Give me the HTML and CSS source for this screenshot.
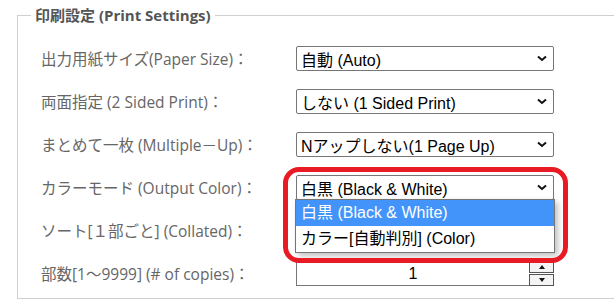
FILE: index.html
```html
<!DOCTYPE html>
<html lang="ja">
<head>
  <meta charset="UTF-8">
  <meta name="viewport" content="width=device-width, initial-scale=1.0">
  <title>印刷設定</title>
  <link rel="stylesheet" href="styles.css">
</head>
<body>

<fieldset class="settings">
  <legend>印刷設定 (Print Settings)</legend>

  <div class="row">
    <label>出力用紙サイズ(Paper Size)：</label>
    <div class="select"><span>自動 (Auto)</span><svg class="chev" width="10" height="7" viewBox="0 0 10 7"><polyline points="1,1.5 5,5 9,1.5" /></svg></div>
  </div>

  <div class="row">
    <label>両面指定 (2 Sided Print)：</label>
    <div class="select"><span>しない (1 Sided Print)</span><svg class="chev" width="10" height="7" viewBox="0 0 10 7"><polyline points="1,1.5 5,5 9,1.5" /></svg></div>
  </div>

  <div class="row">
    <label>まとめて一枚 (Multiple－Up)：</label>
    <div class="select"><span>Nアップしない(1 Page Up)</span><svg class="chev" width="10" height="7" viewBox="0 0 10 7"><polyline points="1,1.5 5,5 9,1.5" /></svg></div>
  </div>

  <div class="row">
    <label>カラーモード (Output Color)：</label>
    <div class="select open">
      <span>白黒 (Black &amp; White)</span><svg class="chev" width="10" height="7" viewBox="0 0 10 7"><polyline points="1,1.5 5,5 9,1.5" /></svg>
      <ul class="dropdown">
        <li class="active">白黒 (Black &amp; White)</li>
        <li>カラー[自動判別] (Color)</li>
      </ul>
      <div class="mark"></div>
    </div>
  </div>

  <div class="row">
    <label>ソート[１部ごと] (Collated)：</label>
    <div class="select"></div>
  </div>

  <div class="row">
    <label>部数[1～9999] (# of copies)：</label>
    <div class="number">
      <div class="value">1</div>
      <div class="spin">
        <div class="btn"><svg width="6" height="4" viewBox="0 0 6 4"><polygon points="3,0 6,4 0,4" /></svg></div>
        <div class="btn"><svg width="6" height="4" viewBox="0 0 6 4"><polygon points="0,0 6,0 3,4" /></svg></div>
      </div>
    </div>
  </div>
</fieldset>

</body>
</html>
```

FILE: styles.css
```css
body { margin: 0; overflow: hidden; background-color: #ffffff; font-family: "Open Sans", "Noto Sans CJK JP", sans-serif; }
.settings { margin: 5px 0 0 17px; width: 640px; border: 1px solid #cfcfcf; border-right: none; padding: 21px 0 12px 23px; display: flex; flex-direction: column; gap: 18px; }
legend { font-size: 15px; line-height: 20px; font-weight: bold; color: #555; padding: 0 4px; margin-left: -10px; }
.row { display: flex; align-items: center; height: 25px; }
label { width: 255px; font-size: 15.5px; color: #666; white-space: nowrap; }
.select { position: relative; box-sizing: border-box; width: 258px; height: 25px; border: 1px solid #767676; border-radius: 2px; display: flex; align-items: center; justify-content: space-between; padding: 0 6px 0 4px; font-family: "Liberation Sans", "Noto Sans CJK JP", sans-serif; font-size: 16px; color: #000; }
.chev { fill: none; stroke: #111; stroke-width: 2; }
.dropdown { position: absolute; top: 23px; left: -2px; width: 260px; margin: 0; padding: 0; list-style: none; box-sizing: border-box; border: 1px solid #767676; background-color: #fff; box-shadow: 3px 3px 6px rgba(0, 0, 0, 0.25); z-index: 2; }
.dropdown li { height: 26px; line-height: 26px; padding-left: 5px; }
.dropdown li.active { background-color: #4394fa; color: #fff; }
.mark { position: absolute; left: -14px; top: -9px; width: 285px; height: 96px; box-sizing: border-box; border: 5px solid #e81b24; border-radius: 16px; z-index: 3; }
.number { display: flex; width: 258px; height: 25px; font-family: "Liberation Sans", "Noto Sans CJK JP", sans-serif; font-size: 16px; }
.value { flex: 1; box-sizing: border-box; border: 1px solid #767676; border-right: none; text-align: center; line-height: 23px; color: #000; }
.spin { width: 25px; display: flex; flex-direction: column; gap: 1px; }
.btn { flex: 1; box-sizing: border-box; border: 1px solid #555; background-color: #f4f4f4; display: flex; align-items: center; justify-content: center; }
.btn svg { fill: #111; }
```
